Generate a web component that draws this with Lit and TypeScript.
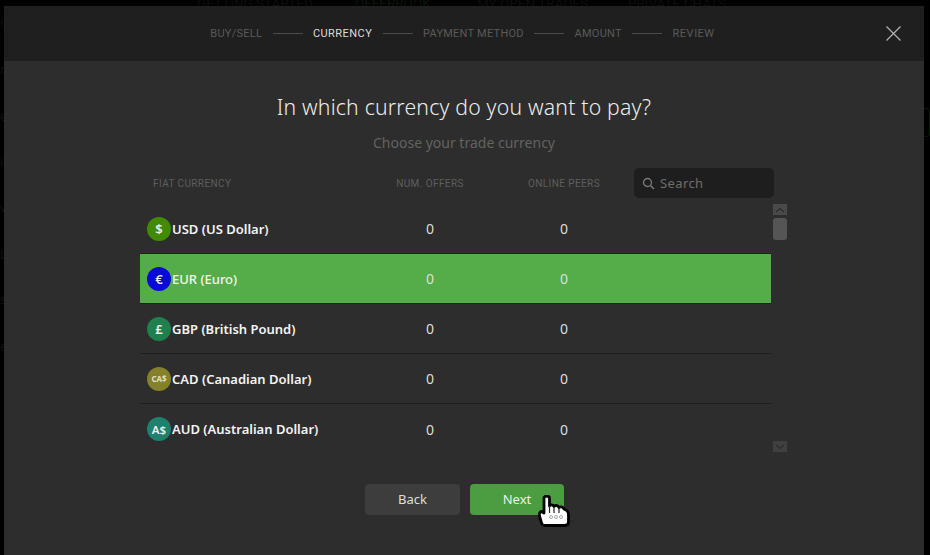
import { LitElement, html, css, svg } from "lit";
import { customElement } from "lit/decorators.js";

const STEPS = ["BUY/SELL", "CURRENCY", "PAYMENT METHOD", "AMOUNT", "REVIEW"];
const ROWS = [
  { sym: "$", name: "USD (US Dollar)", color: "#428a00", cls: "" },
  { sym: "€", name: "EUR (Euro)", color: "#0a0ad8", cls: "", selected: true },
  { sym: "£", name: "GBP (British Pound)", color: "#1f7f4d", cls: "" },
  { sym: "CA$", name: "CAD (Canadian Dollar)", color: "#85802a", cls: "tiny" },
  { sym: "A$", name: "AUD (Australian Dollar)", color: "#1f806d", cls: "small" },
];
const NAV = [
  { x: 197, t: "GETTING STARTED" },
  { x: 355, t: "OFFERBOOK", green: true },
  { x: 477, t: "MY OPEN TRADES" },
  { x: 628, t: "PRIVATE CHATS" },
];
const SIDE = [
  { y: 17, t: "i" }, { y: 64, t: "r" }, { y: 111, t: "e" }, { y: 156, t: "i" },
  { y: 202, t: "v" }, { y: 249, t: "L" }, { y: 294, t: "s" }, { y: 341, t: "e" },
];

@customElement("app-root")
export class AppRoot extends LitElement {
  static styles = css`
    :host { display: block; position: relative; width: 930px; height: 555px; overflow: hidden; background: #000; font-family: "Noto Sans", sans-serif; }
    .nav { position: absolute; top: -4px; white-space: nowrap; font-family: "Roboto", sans-serif; font-size: 13.5px; line-height: 14px; color: #0e0e0e; }
    .nav.green { color: #0b1409; }
    .side { position: absolute; left: 0; font-size: 12px; line-height: 12px; color: #111; }
    .ghost { position: absolute; left: 918px; top: 108px; width: 10px; height: 27px; border: 1px solid #0c180a; border-radius: 4px; }
    .modal { position: absolute; left: 4px; top: 6px; width: 920px; height: 549px; background: #2d2d2d; display: flex; flex-direction: column; }
    .head { height: 55px; flex: none; background: #1f1f1f; display: flex; align-items: center; justify-content: center; gap: 10.4px; position: relative; padding-right: 3px; font-family: "Roboto", sans-serif; font-size: 11px; letter-spacing: .25px; color: #5a5a5a; box-sizing: border-box; }
    .head .on { color: #dcdcdc; letter-spacing: .45px; }
    .head .last { letter-spacing: .5px; }
    .head i { display: block; width: 30px; height: 1px; background: #4b4b4b; }
    .close { position: absolute; left: 881px; top: 19px; width: 17px; height: 17px; }
    .title { margin-top: 32px; text-align: center; font-size: 21.2px; font-weight: 300; line-height: 28px; color: #ececec; letter-spacing: .2px; }
    .sub { margin-top: 12px; text-align: center; font-size: 14px; line-height: 20px; color: #626262; }
    .tablehead { margin: 15px 0 0 136px; width: 634px; height: 30px; display: grid; grid-template-columns: 223px 134px 134px 3px 140px; align-items: center; font-family: "Roboto", sans-serif; font-size: 10px; letter-spacing: .4px; color: #5e5e5e; }
    .tablehead .first { padding: 1px 0 0 13px; }
    .tablehead .c { text-align: center; padding-top: 1px; }
    .search { grid-column: 5; display: flex; align-items: center; gap: 5px; height: 30px; padding-left: 8px; background: #1e1e1e; border-radius: 5px; box-sizing: border-box; width: 140px; font-family: "Noto Sans", sans-serif; font-size: 13px; color: #6e6e6e; }
    .listwrap { margin: 6px 0 0 136px; display: flex; gap: 2px; height: 250px; }
    .list { width: 631px; }
    .row { height: 50px; box-sizing: border-box; border-bottom: 1px solid #1f1f1f; display: grid; grid-template-columns: 223px 134px 134px 1fr; align-items: center; color: #e8e8e8; font-size: 13px; }
    .row:last-child { border-bottom: 0; }
    .row.sel { background: #55ad4a; }
    .row .name { display: flex; align-items: center; gap: 1px; padding-left: 7px; font-weight: 600; color: #f4f4f4; white-space: nowrap; font-size: 13px; }
    .row .sel-name { font-weight: 500; }
    .coin { width: 24px; height: 24px; border-radius: 50%; flex: none; display: flex; align-items: center; justify-content: center; font-size: 13px; font-weight: 600; color: #eee; }
    .coin.small { font-size: 11.5px; }
    .coin.tiny { font-size: 8px; font-weight: 700; color: #e0e0c0; }
    .row .num { text-align: center; font-size: 14px; color: #ddd; }
    .bar { position: relative; width: 14px; height: 250px; }
    .arrow { width: 14px; height: 11px; background: #4a4a4a; display: flex; align-items: center; justify-content: center; }
    .thumb { width: 14px; height: 22px; margin-top: 3px; border-radius: 3px; background: #555; }
    .arrow.down { position: absolute; left: 0; top: 237px; background: #404040; }
    .btns { margin-top: 30px; display: flex; justify-content: center; gap: 10px; padding-left: 1px; }
    .btn { width: 95px; height: 31px; border-radius: 4px; display: flex; align-items: center; justify-content: center; box-sizing: border-box; padding-bottom: 2px; font-size: 13px; color: #ddd; background: #3d3d3d; }
    .btn.next { width: 94px; background: #4c9c41; color: #eaf3e6; }
    .hand { position: absolute; left: 538px; top: 495px; width: 32px; height: 32px; }
  `;

  render() {
    return html`
      ${NAV.map((n) => html`<span class="nav ${n.green ? "green" : ""}" style="left:${n.x}px">${n.t}</span>`)}
      ${SIDE.map((s) => html`<span class="side" style="top:${s.y}px">${s.t}</span>`)}
      <div class="ghost"></div>
      <div class="modal">
        <div class="head">
          ${STEPS.map((s, i) => html`${i ? html`<i></i>` : ""}<span class="${i === 1 ? "on" : i === 4 ? "last" : ""}">${s}</span>`)}
          <svg class="close" viewBox="0 0 17 17"><path d="M1.500 1.500 15.500 15.500M15.500 1.500 1.500 15.500" stroke="#b4b4b4" stroke-width="1.200" fill="none"/></svg>
        </div>
        <div class="title">In which currency do you want to pay?</div>
        <div class="sub">Choose your trade currency</div>
        <div class="tablehead">
          <div class="first">FIAT CURRENCY</div>
          <div class="c">NUM. OFFERS</div>
          <div class="c">ONLINE PEERS</div>
          <div class="search">
            <svg width="13" height="13" viewBox="0 0 13 13"><circle cx="5.500" cy="5.500" r="4" stroke="#7a7a7a" stroke-width="1.300" fill="none"/><path d="M8.500 8.500 12 12" stroke="#7a7a7a" stroke-width="1.500"/></svg>
            Search
          </div>
        </div>
        <div class="listwrap">
          <div class="list">
            ${ROWS.map((r) => html`
              <div class="row ${r.selected ? "sel" : ""}">
                <div class="name ${r.selected ? "sel-name" : ""}"><span class="coin ${r.cls}" style="background:${r.color}">${r.sym}</span><span>${r.name}</span></div>
                <div class="num">0</div>
                <div class="num">0</div>
              </div>`)}
          </div>
          <div class="bar">
            <div class="arrow"><svg width="10" height="6" viewBox="0 0 10 6"><path d="M1 5 5 1.500 9 5" stroke="#2d2d2d" stroke-width="1.200" fill="none"/></svg></div>
            <div class="thumb"></div>
            <div class="arrow down"><svg width="10" height="6" viewBox="0 0 10 6"><path d="M1 1 5 4.500 9 1" stroke="#2d2d2d" stroke-width="1.200" fill="none"/></svg></div>
          </div>
        </div>
        <div class="btns">
          <div class="btn">Back</div>
          <div class="btn next">Next</div>
        </div>
      </div>
      <svg class="hand" viewBox="0 0 32 32">
        ${svg`<path d="M6 3C6 .5 11.500 .5 11.500 3V11C12.500 9.500 15 9.500 16 11.500 17 10 20 10 21 12.500 22 11.500 25 11.500 26 14L28 15C30 16 30.500 18 30.500 21V27C30.500 29.500 29 30.500 26.500 30.500H7C5 30.500 4 30 3.500 28L1.500 21C1 18.500 2 16.500 3.500 16.500L6 18Z" fill="#fff" stroke="#000" stroke-width="2.800" stroke-linejoin="round"/>
        <path d="M11.500 11V18M16 11.500V18M21 12.500V18" stroke="#222" stroke-width="1.200" fill="none"/>
        <g fill="none" stroke="#aaa" stroke-width="1"><circle cx="13" cy="22" r="1.500"/><circle cx="18" cy="22" r="1.500"/><circle cx="23" cy="22" r="1.500"/></g>`}
      </svg>
    `;
  }
}
